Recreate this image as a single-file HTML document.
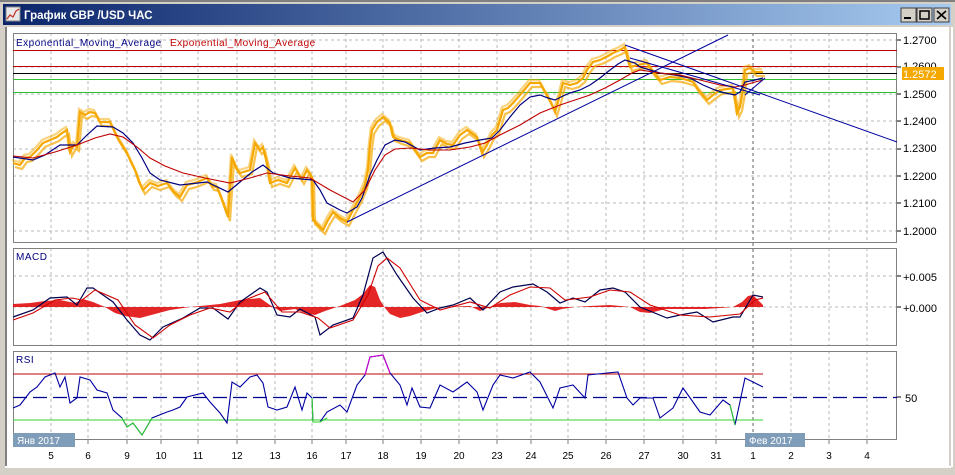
<!DOCTYPE html>
<html><head><meta charset="utf-8"><style>
html,body{margin:0;padding:0;width:955px;height:475px;overflow:hidden;background:#d4d0c8;}
svg{display:block;font-family:"Liberation Sans","DejaVu Sans",sans-serif;}
</style></head><body>
<svg width="955" height="475" viewBox="0 0 955 475" xmlns="http://www.w3.org/2000/svg">
<defs>
<linearGradient id="tb" x1="0" x2="1" y1="0" y2="0"><stop offset="0" stop-color="#0a246a"/><stop offset="1" stop-color="#a6caf0"/></linearGradient>
</defs>
<rect x="0" y="0" width="955" height="475" fill="#d4d0c8"/>
<rect x="0" y="0" width="955" height="2" fill="#808080"/>
<rect x="3" y="4" width="948" height="21" fill="url(#tb)"/>
<rect x="6" y="7" width="14" height="14" fill="#e8e8e8" stroke="#888"/>
<polyline points="7,19 10,15 13,17 16,11 19,9" fill="none" stroke="#c03020" stroke-width="1.2"/>
<text x="24" y="19" font-size="11.5" font-weight="bold" fill="#fff">График GBP /USD  ЧАС</text>
<g fill="#d4d0c8" stroke="#404040"><rect x="901" y="8" width="15" height="14"/><rect x="917" y="8" width="15" height="14"/><rect x="934" y="8" width="15" height="14"/></g>
<rect x="904" y="17" width="7" height="2" fill="#000"/>
<rect x="920" y="11" width="9" height="8" fill="none" stroke="#000" stroke-width="1.5"/>
<path d="M937 11 L946 19 M946 11 L937 19" stroke="#000" stroke-width="1.6"/>
<rect x="5" y="27" width="944" height="439" fill="#fff"/>
<rect x="5" y="27" width="2" height="439" fill="#808080"/>
<rect x="951" y="27" width="2" height="440" fill="#fff"/>
<rect x="5" y="466" width="946" height="2" fill="#fff"/>
<g stroke="#b8b8b8" stroke-dasharray="3,3" stroke-width="1">
<path d="M51 33V242M88 33V242M127 33V242M161 33V242M198 33V242M237 33V242M275 33V242M312 33V242M346 33V242M383 33V242M421 33V242M459 33V242M497 33V242M531 33V242M568 33V242M606 33V242M644 33V242M683 33V242M716 33V242M791 33V242M829 33V242M867 33V242"/>
<path d="M51 248V345M88 248V345M127 248V345M161 248V345M198 248V345M237 248V345M275 248V345M312 248V345M346 248V345M383 248V345M421 248V345M459 248V345M497 248V345M531 248V345M568 248V345M606 248V345M644 248V345M683 248V345M716 248V345M791 248V345M829 248V345M867 248V345"/>
<path d="M51 351V439M88 351V439M127 351V439M161 351V439M198 351V439M237 351V439M275 351V439M312 351V439M346 351V439M383 351V439M421 351V439M459 351V439M497 351V439M531 351V439M568 351V439M606 351V439M644 351V439M683 351V439M716 351V439M791 351V439M829 351V439M867 351V439"/>
<path d="M13 40H897M13 67H897M13 94H897M13 121H897M13 149H897M13 176H897M13 203H897M13 231H897M13 276H897M13 307H897"/>
</g>
<path d="M753 33V439" stroke="#606060" stroke-dasharray="3,3"/>
<g fill="none" stroke="#808080"><rect x="13.5" y="33.5" width="883" height="209"/><rect x="13.5" y="248.5" width="883" height="97"/><rect x="13.5" y="351.5" width="883" height="88"/></g>
<path d="M13 50.5H897M13 66.5H897" stroke="#c00000"/>
<path d="M13 73.5H897" stroke="#000"/>
<path d="M13 79.5H897M13 92.5H897" stroke="#30c030"/>
<g id="pr"><polyline fill="none" stroke="#f5a800" stroke-width="2.2" points="13,163 20,165 25,158 30,157 37,150 43,143 50,140 57,137 62,133 67,130 70,152 74,145 77,147 80,112 85,115 90,112 95,113 100,122 110,122 117,137 122,145 127,153 131,162 135,170 139,182 143,190 150,183 158,186 167,183 174,192 180,197 187,185 195,183 207,178 212,186 217,187 222,200 228,217 232,157 236,168 240,173 250,170 255,143 260,150 263,147 267,163 270,183 278,180 287,183 295,168 302,180 307,170 312,177 313,220 318,225 323,230 328,220 333,212 340,218 347,222 352,212 360,197 365,185 368,170 370,145 372,130 377,122 383,117 390,123 393,137 400,140 410,143 415,150 420,157 427,153 433,153 440,140 447,144 453,145 460,135 467,130 477,137 482,153 487,145 492,135 497,130 503,110 508,108 513,103 520,95 530,83 540,83 545,92 548,97 552,105 555,112 560,95 563,83 570,85 577,83 583,78 587,70 593,62 600,60 608,56 613,53 620,50 625,47 628,60 630,67 638,65 647,63 653,72 660,80 670,77 680,78 687,80 693,82 700,92 707,100 713,95 720,90 727,89 733,88 736,105 737,113 740,107 743,90 745,70 750,68 755,72 763,72"/></g>
<use href="#pr" transform="translate(2,4)" opacity="0.7"/>
<use href="#pr" transform="translate(-1,-3)" opacity="0.5"/>
<polyline fill="none" stroke="#000080" stroke-width="1.2" points="13,157 33,160 45,155 60,145 77,145 87,135 97,126 113,127 123,133 133,143 142,158 150,173 160,180 180,185 207,182 228,192 240,182 252,172 263,165 273,173 290,178 313,180 320,190 327,203 340,210 347,213 357,207 362,198 370,175 377,160 385,145 395,140 405,142 420,150 435,148 450,147 465,143 480,140 492,138 500,130 510,117 520,105 530,97 540,95 548,98 555,100 563,96 570,93 580,90 590,85 600,78 610,70 618,64 625,60 635,63 640,67 650,70 660,73 675,75 690,78 703,85 715,90 725,93 735,95 740,92 745,82 755,80 763,78"/>
<polyline fill="none" stroke="#c00000" stroke-width="1.1" points="13,156 33,158 55,152 77,145 95,138 110,134 123,137 137,147 150,158 165,166 183,173 205,178 230,183 250,178 267,173 290,176 310,178 330,190 353,202 365,190 375,170 385,155 395,149 410,148 430,150 450,150 470,147 485,143 500,135 520,125 540,113 560,105 575,100 590,95 605,88 620,80 632,73 640,70 660,73 680,75 700,80 720,85 735,87 745,85 755,82 763,80"/>
<path d="M347 222L728 35M625 45L897 142M630 58L760 95" stroke="#0000a0" stroke-width="1" fill="none"/>
<path d="M745 95L765 78" stroke="#0000a0"/>
<text x="16" y="46" font-size="10" fill="#000080" letter-spacing="0.5">Exponential_Moving_Average</text>
<text x="170" y="46" font-size="10" fill="#c00000" letter-spacing="0.5">Exponential_Moving_Average</text>
<g font-size="11" fill="#000"><text x="903" y="44">1.2700</text><text x="903" y="70">1.2600</text><text x="903" y="98">1.2500</text><text x="903" y="125">1.2400</text><text x="903" y="152">1.2300</text><text x="903" y="180">1.2200</text><text x="903" y="207">1.2100</text><text x="903" y="235">1.2000</text>
<text x="903" y="281">+0.005</text><text x="903" y="312">+0.000</text><text x="905" y="402">50</text></g>
<g stroke="#000"><path d="M897 40H901M897 67H901M897 94H901M897 121H901M897 149H901M897 176H901M897 203H901M897 231H901M897 276H901M897 307H901M897 397H901"/></g>
<rect x="902" y="67" width="42" height="13" fill="#f5a800"/>
<text x="903" y="78" font-size="11" fill="#fff">1.2572</text>
<text x="16" y="260" font-size="10" fill="#000080" letter-spacing="0.5">MACD</text>
<polygon fill="#e00000" opacity="0.85" points="13,307 13,304 30,303 45,301 60,300 75,303 83,299 93,302 105,307 115,313 125,316 140,318 155,314 170,310 190,307 220,304 240,300 260,298 270,305 280,311 295,309 305,313 315,315 325,311 340,306 355,300 363,294 370,285 375,287 380,300 385,308 390,314 400,318 410,316 425,311 440,307 470,306 480,311 485,309 500,303 515,302 530,305 540,306 555,311 562,309 575,307 590,306 610,305 630,307 640,312 650,313 665,309 690,309 705,309 720,308 733,307 742,302 748,296 753,295 758,300 763,305 763,307"/>
<polyline fill="none" stroke="#000050" stroke-width="1.2" points="13,317 33,310 50,298 67,297 77,305 87,288 93,288 113,302 127,320 140,335 150,340 163,327 183,318 200,308 213,308 228,319 240,302 260,288 267,292 277,315 290,317 300,309 315,317 320,335 333,325 353,318 363,295 373,258 383,252 397,275 413,298 427,313 440,308 453,305 470,298 483,310 500,292 513,287 533,284 547,292 560,303 573,298 585,302 600,290 613,288 625,292 640,307 667,318 680,315 697,312 713,322 733,317 740,317 753,295 763,297"/>
<polyline fill="none" stroke="#d00000" stroke-width="1.1" points="13,320 33,313 55,300 72,298 82,300 95,290 118,300 135,325 153,338 170,325 190,315 210,308 230,312 245,300 265,292 282,312 300,312 318,318 330,328 353,320 368,295 378,266 387,258 400,268 420,300 440,310 470,302 490,308 510,295 530,287 550,288 565,300 590,297 610,290 630,292 650,305 680,315 710,317 740,314 755,300 763,298"/>
<text x="16" y="363" font-size="10" fill="#000080" letter-spacing="0.5">RSI</text>
<path d="M13 374H763" stroke="#c00000"/>
<path d="M13 420H763" stroke="#30d030"/>
<path d="M13 397.5H897" stroke="#000090" stroke-dasharray="14,6" stroke-width="1.3"/>
<polyline fill="none" stroke="#0000a0" stroke-width="1.1" points="13,408 20,405 30,392 37,387 45,377 55,373 60,387 65,377 70,403 77,398 80,377 90,380 97,390 107,393 113,410 122,418 127,427 133,423 142,435 152,418 167,412 173,410 180,407 187,397 203,393 210,402 220,413 227,423 232,382 240,387 250,377 257,375 263,383 268,407 277,410 287,407 295,387 302,410 307,393 312,398 313,422 320,422 327,412 340,405 347,412 357,385 365,375 370,357 383,355 390,373 400,385 407,405 412,388 420,407 430,408 440,385 453,392 467,382 477,392 483,410 493,385 500,375 513,378 530,372 540,382 553,408 560,388 573,385 585,398 588,375 607,373 618,372 627,398 633,405 640,398 653,398 660,418 673,408 683,388 693,402 700,412 710,415 723,400 730,405 735,425 745,378 753,382 763,387"/>
<polyline fill="none" stroke="#d000d0" stroke-width="1.1" points="365,375 370,357 383,355 390,373"/>
<polyline fill="none" stroke="#30d030" stroke-width="1.1" points="122,418 127,427 133,423 142,435 152,418"/>
<polyline fill="none" stroke="#30d030" stroke-width="1.1" points="312,398 313,422 320,422 327,418"/>
<polyline fill="none" stroke="#30d030" stroke-width="1.1" points="730,405 735,425"/>
<rect x="13" y="433" width="62" height="14" fill="#7f9db9"/>
<text x="17" y="444" font-size="10" fill="#fff">Янв 2017</text>
<rect x="745" y="433" width="60" height="14" fill="#7f9db9"/>
<text x="749" y="444" font-size="10" fill="#fff">Фев 2017</text>
<g stroke="#808080"><path d="M88 439V444M127 439V444M161 439V444M198 439V444M237 439V444M275 439V444M312 439V444M346 439V444M383 439V444M421 439V444M459 439V444M497 439V444M531 439V444M568 439V444M606 439V444M644 439V444M683 439V444M716 439V444M829 439V444M867 439V444"/></g>
<g font-size="10" fill="#000" text-anchor="middle">
<text x="51" y="459">5</text><text x="88" y="459">6</text><text x="127" y="459">9</text><text x="161" y="459">10</text><text x="198" y="459">11</text><text x="237" y="459">12</text><text x="275" y="459">13</text><text x="312" y="459">16</text><text x="346" y="459">17</text><text x="383" y="459">18</text><text x="421" y="459">19</text><text x="459" y="459">20</text><text x="497" y="459">23</text><text x="531" y="459">24</text><text x="568" y="459">25</text><text x="606" y="459">26</text><text x="644" y="459">27</text><text x="683" y="459">30</text><text x="716" y="459">31</text><text x="753" y="459">1</text><text x="791" y="459">2</text><text x="829" y="459">3</text><text x="867" y="459">4</text>
</g>
</svg>
</body></html>
